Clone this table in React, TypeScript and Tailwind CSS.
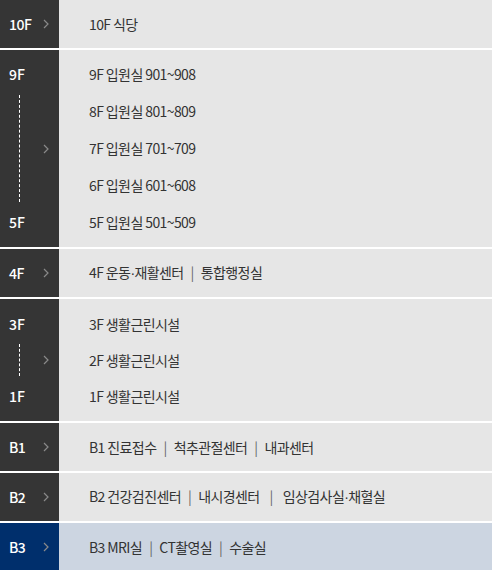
import React from 'react';

type Floor = {
  top: string;
  bottom?: string;
  items: string[][];
  active?: boolean;
  itemH?: string;
  padY?: string;
  wideLast?: boolean;
};

const floors: Floor[] = [
  { top: '10F', items: [['10F 식당']] },
  {
    top: '9F',
    bottom: '5F',
    items: [['9F 입원실 901~908'], ['8F 입원실 801~809'], ['7F 입원실 701~709'], ['6F 입원실 601~608'], ['5F 입원실 501~509']],
    itemH: 'h-[37px]',
    padY: 'py-[6px]',
  },
  { top: '4F', items: [['4F 운동·재활센터', '통합행정실']] },
  {
    top: '3F',
    bottom: '1F',
    items: [['3F 생활근린시설'], ['2F 생활근린시설'], ['1F 생활근린시설']],
    itemH: 'h-[36px]',
    padY: 'py-[7px]',
  },
  { top: 'B1', items: [['B1 진료접수', '척추관절센터', '내과센터']] },
  { top: 'B2', items: [['B2 건강검진센터', '내시경센터', '임상검사실·채혈실']], wideLast: true },
  { top: 'B3', items: [['B3 MRI실', 'CT촬영실', '수술실']], active: true },
];

function Chevron() {
  return (
    <svg width="6" height="10" viewBox="0 0 6 10" className="shrink-0">
      <path d="M1 1l4 4-4 4" fill="none" stroke="#8a8a8a" strokeWidth="1.2" />
    </svg>
  );
}

// 가운뎃점은 좁은 라틴 글꼴로
function Label({ text }: { text: string }) {
  const bits = text.split('·');
  return (
    <>
      {bits.map((b, i) => (
        <React.Fragment key={i}>
          {i > 0 && <span style={{ fontFamily: '"Liberation Sans", Arial, sans-serif' }}>·</span>}
          {b}
        </React.Fragment>
      ))}
    </>
  );
}

function ItemText({ parts, wideLast }: { parts: string[]; wideLast?: boolean }) {
  return (
    <span>
      {parts.map((p, i) => (
        <React.Fragment key={i}>
          {i > 0 && (
            <span className={`text-[#666] ${wideLast && i === parts.length - 1 ? 'mx-[10px]' : 'mx-[7px]'}`}>|</span>
          )}
          <Label text={p} />
        </React.Fragment>
      ))}
    </span>
  );
}

function FloorRow({ floor, first }: { floor: Floor; first: boolean }) {
  const group = !!floor.bottom;
  return (
    <div className={`flex ${first ? '' : 'border-t-2 border-white'}`}>
      <div
        className={`w-[59px] shrink-0 flex items-center pl-[9px] pr-[10px] text-white text-[14px] font-medium ${
          floor.active ? 'bg-[#002f6c]' : 'bg-[#353535]'
        } ${group ? floor.padY : 'h-[48px]'}`}
      >
        {group ? (
          <div className="flex flex-col self-stretch w-[30px]">
            <div className={`flex items-center ${floor.itemH}`}>{floor.top}</div>
            <div className="flex-1 ml-[10px] my-[2px] border-l border-dashed border-white" />
            <div className={`flex items-center ${floor.itemH}`}>{floor.bottom}</div>
          </div>
        ) : (
          <div className="w-[30px] tracking-[-0.5px]">{floor.top}</div>
        )}
        <div className="ml-auto flex items-center">
          <Chevron />
        </div>
      </div>
      <div
        className={`flex-1 flex flex-col justify-center pl-[30px] text-[14px] text-[#333] tracking-[-0.6px] ${
          floor.active ? 'bg-[#ccd5e1]' : 'bg-[#e6e6e6]'
        } ${group ? floor.padY : 'h-[48px]'}`}
      >
        {floor.items.map((it, i) => (
          <div key={i} className={`flex items-center ${group ? floor.itemH : ''}`}>
            <ItemText parts={it} wideLast={floor.wideLast} />
          </div>
        ))}
      </div>
    </div>
  );
}

export default function App() {
  return (
    <div
      className="w-[492px] h-[570px] overflow-hidden bg-white"
      style={{ fontFamily: '"Noto Sans CJK KR", "Noto Sans", sans-serif' }}
    >
      {floors.map((f, i) => (
        <FloorRow key={f.top} floor={f} first={i === 0} />
      ))}
    </div>
  );
}
